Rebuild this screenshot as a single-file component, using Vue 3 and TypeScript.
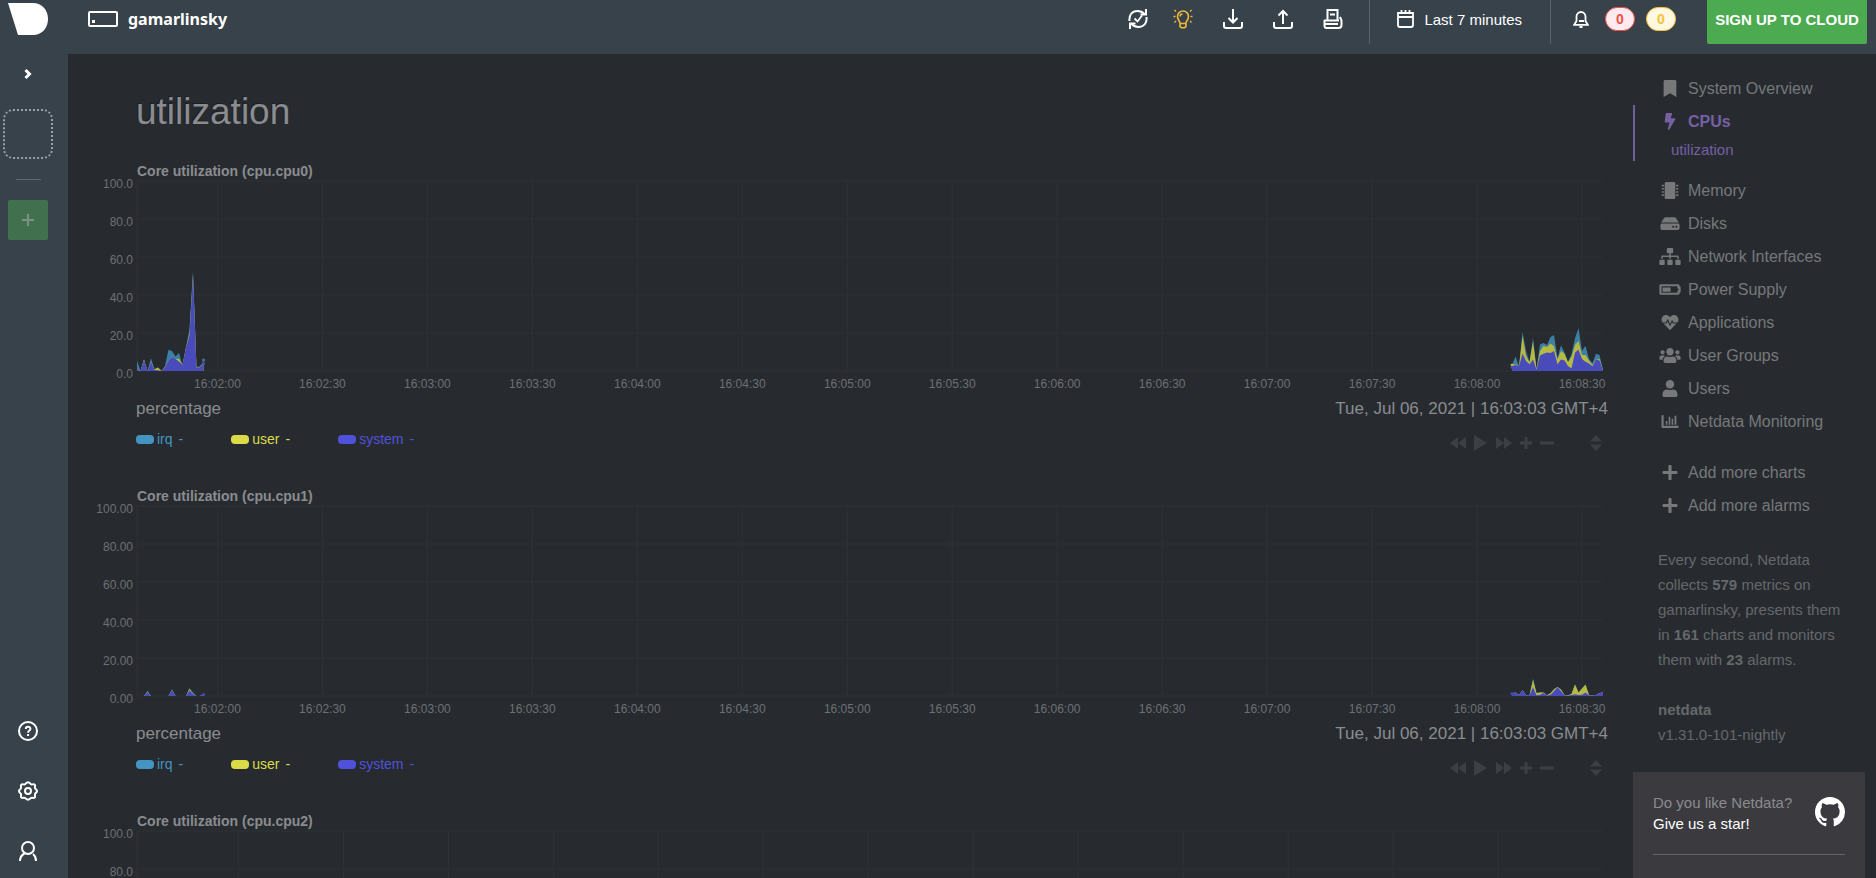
<script setup lang="ts">
interface Band { start: number; total: number[]; user: number[]; system: number[] }
interface Chart { id: string; digits: number; offset: number; firstTick: number; bands: Band[]; dots: { t: number; v: number; c: string }[] }

const SPAN = 419
const PLOT_H = 190

const charts: Chart[] = [
  {
    id: 'cpu.cpu0', digits: 1, offset: 23, firstTick: 120,
    bands: [
      {
        start: 0,
        total: [5.6, 0, 6.2, 0, 6.7, 0.9, 1.8, 0, 2.6, 11.2, 10.5, 7.7, 9.5, 3.2, 12.6, 22, 52.3, 2.1, 2.5, 5.3],
        user: [1, 0, 6, 0, 4.6, 0.9, 1.8, 0, 2.1, 5.3, 7.4, 6.3, 6.5, 3.2, 12.4, 19.5, 51, 1.6, 2, 4.2],
        system: [1, 0, 5.8, 0, 4.6, 0.6, 0.4, 0, 2, 5.3, 7.4, 6.3, 5, 3.2, 12.3, 18.5, 51, 1.6, 2, 4.2],
      },
      {
        start: 393,
        total: [3.2, 7.7, 2.5, 20.5, 10.5, 4.9, 17.5, 1, 14, 14.8, 13.7, 17.9, 19, 7, 13.5, 9.6, 4.9, 8.8, 17.2, 22.6, 10.5, 13.3, 6.3, 4.2, 9.1, 8.4, 0.7],
        user: [3.2, 3.5, 2.5, 18.4, 7.9, 4.6, 15.4, 1, 10.6, 13.2, 12.6, 14.4, 13, 6, 10.5, 9.1, 4.6, 7.7, 13.7, 15.8, 8.4, 8.4, 5.6, 3.2, 6.2, 6.3, 0.7],
        system: [2.5, 3.2, 2.5, 9.1, 5.3, 3.5, 6, 0.7, 8.1, 9.1, 9.8, 9.5, 10.5, 3.5, 6, 5.6, 2.5, 1.4, 9.8, 11.2, 6.3, 4.9, 3.9, 2.5, 6.2, 5.6, 0.4],
      },
    ],
    dots: [{ t: 19, v: 5.8, c: 'irq' }, { t: 19, v: 4, c: 'system' }, { t: 393, v: 3.2, c: 'user' }, { t: 393, v: 2, c: 'system' }],
  },
  {
    id: 'cpu.cpu1', digits: 2, offset: 23, firstTick: 120,
    bands: [
      {
        start: 0,
        total: [0, 0, 0, 2.8, 0, 0, 0, 0, 0, 0, 3.5, 0, 0, 0, 0, 4, 2, 0, 0, 0.8],
        user: [0, 0, 0, 2, 0, 0, 0, 0, 0, 0, 3.2, 0, 0, 0, 0, 4, 1, 0, 0, 0.8],
        system: [0, 0, 0, 1.8, 0, 0, 0, 0, 0, 0, 3.2, 0, 0, 0, 0, 3, 1, 0, 0, 0.8],
      },
      {
        start: 393,
        total: [1.4, 1.8, 0.5, 3, 0.4, 0.5, 9.1, 1.6, 1.9, 1.8, 0.4, 1.4, 3.5, 4.9, 3.5, 0.5, 0.4, 1.1, 6.1, 1.8, 3.9, 6.1, 0.5, 0.4, 0.5, 1.4, 2.1],
        user: [1.4, 1.8, 0.5, 3, 0.4, 0.5, 8.6, 1.6, 1.9, 1.8, 0.4, 1.4, 3.5, 4.7, 3.3, 0.5, 0.4, 1.1, 6.1, 1.8, 3.9, 6.1, 0.5, 0.4, 0.5, 1.4, 2.1],
        system: [1.4, 1.8, 0.5, 3, 0.4, 0.5, 4.6, 0.4, 0.7, 1.6, 0.3, 0.7, 2.5, 4.6, 2.5, 0.4, 0.3, 0.5, 0.9, 0.5, 0.7, 1.8, 0.4, 0.4, 0.5, 1.4, 2.1],
      },
    ],
    dots: [{ t: 19, v: 0.8, c: 'system' }, { t: 393, v: 1.2, c: 'system' }],
  },
  { id: 'cpu.cpu2', digits: 1, offset: 29, firstTick: 120, bands: [], dots: [] },
]

const dims = ['irq', 'user', 'system']
const levels = [100, 80, 60, 40, 20, 0]

const pct = (t: number) => `${(t / SPAN * 100).toFixed(3)}%`
const px = (v: number) => PLOT_H - v / 100 * PLOT_H

function ticks(c: Chart) {
  return Array.from({ length: 14 }, (_, i) => {
    const s = c.firstTick + i * 30
    const p = (n: number) => String(n).padStart(2, '0')
    return { t: c.offset + i * 30, label: `16:${p(Math.floor(s / 60))}:${p(s % 60)}` }
  }).filter(k => k.t < SPAN)
}

function area(b: Band, key: 'total' | 'user' | 'system') {
  const end = b.start + b[key].length - 1
  const line = b[key].map((v, i) => `L${b.start + i} ${px(v).toFixed(1)}`).join('')
  return `M${b.start} ${PLOT_H}${line}L${end} ${PLOT_H}Z`
}

const menuIcons: Record<string, { w: number; d: string }> = {
  bookmark: { w: 384, d: 'M0 512V48C0 21.5 21.5 0 48 0h288c26.500 0 48 21.500 48 48v464L192 400 0 512z' },
  bolt: { w: 320, d: 'M296 160H180.600l42.600-129.800C227.200 15 215.700 0 200 0H56C44 0 33.800 8.900 32.200 20.800l-32 240C-1.700 275.200 9.500 288 24 288h118.700L96.600 482.500c-3.600 15.200 8 29.500 23.300 29.500 8.400 0 16.400-4.400 20.800-12l176-304c9.300-15.900-2.200-36-20.700-36z' },
  memory: { w: 512, d: 'M416 48v416c0 26.500-21.500 48-48 48H144c-26.500 0-48-21.500-48-48V48c0-26.500 21.500-48 48-48h224c26.500 0 48 21.500 48 48zM440 84h42l30 12v24l-30 12h-42zM440 180h42l30 12v24l-30 12h-42zM440 276h42l30 12v24l-30 12h-42zM440 372h42l30 12v24l-30 12h-42zM72 84H30L0 96v24l30 12h42zM72 180H30L0 192v24l30 12h42zM72 276H30L0 288v24l30 12h42zM72 372H30L0 384v24l30 12h42z' },
  disk: { w: 576, d: 'M576 304v96c0 26.500-21.500 48-48 48H48c-26.500 0-48-21.500-48-48v-96c0-26.500 21.500-48 48-48h480c26.500 0 48 21.500 48 48zm-48-80a79.600 79.600 0 0 1 30.800 6.200L462.300 85.400A48 48 0 0 0 422.300 64H153.700a48 48 0 0 0-40 21.400L17.200 230.200A79.600 79.600 0 0 1 48 224h480zm-48 96c-17.700 0-32 14.300-32 32s14.300 32 32 32 32-14.300 32-32-14.300-32-32-32zm-96 0c-17.700 0-32 14.300-32 32s14.300 32 32 32 32-14.300 32-32-14.300-32-32-32z' },
  sitemap: { w: 640, d: 'M128 352H32c-17.700 0-32 14.300-32 32v96c0 17.700 14.300 32 32 32h96c17.700 0 32-14.300 32-32v-96c0-17.700-14.300-32-32-32zm-24-80h192v48h48v-48h192v48h48v-57.600c0-21.200-17.200-38.400-38.400-38.400H344v-64h40c17.700 0 32-14.300 32-32V32c0-17.700-14.300-32-32-32H256c-17.700 0-32 14.300-32 32v96c0 17.700 14.300 32 32 32h40v64H94.400C73.200 224 56 241.200 56 262.400V320h48v-48zm264 80h-96c-17.700 0-32 14.300-32 32v96c0 17.700 14.300 32 32 32h96c17.700 0 32-14.300 32-32v-96c0-17.700-14.300-32-32-32zm240 0h-96c-17.700 0-32 14.300-32 32v96c0 17.700 14.300 32 32 32h96c17.700 0 32-14.300 32-32v-96c0-17.700-14.300-32-32-32z' },
  battery: { w: 640, d: 'M544 160v64h32v64h-32v64H64V160h480m16-64H48c-26.500 0-48 21.500-48 48v224c0 26.500 21.500 48 48 48h512c26.500 0 48-21.500 48-48v-16h8c13.300 0 24-10.700 24-24V184c0-13.300-10.700-24-24-24h-8v-16c0-26.500-21.500-48-48-48zM336 192H96v128h240V192z' },
  heart: { w: 512, d: 'M320.200 243.800l-49.700 99.400c-6 12.100-23.400 11.700-28.900-.6l-56.900-126.300-30 71.700H60.600l182.500 186.500c7.100 7.300 18.600 7.300 25.700 0L451.400 288H342.300l-22.100-44.200zM473.700 73.900l-2.400-2.500c-51.500-52.600-135.800-52.600-187.400 0L256 100l-27.900-28.500c-51.500-52.700-135.900-52.700-187.400 0l-2.400 2.400C-10.400 123.700-12.500 203 31 256h102.400l35.900-86.200c5.400-12.900 23.600-13.200 29.400-.4l58.200 129.300 49-97.900c5.900-11.800 22.700-11.800 28.600 0l27.600 55.200H481c43.500-53 41.400-132.300-7.300-182.100z' },
  users: { w: 640, d: 'M96 224c35.300 0 64-28.700 64-64s-28.700-64-64-64-64 28.700-64 64 28.700 64 64 64zm448 0c35.300 0 64-28.700 64-64s-28.700-64-64-64-64 28.700-64 64 28.700 64 64 64zm32 32h-64c-17.600 0-33.500 7.100-45.100 18.600 40.300 22.100 68.900 62 75.100 109.400h66c17.700 0 32-14.300 32-32v-32c0-35.300-28.700-64-64-64zm-256 0c61.900 0 112-50.100 112-112S381.900 32 320 32 208 82.100 208 144s50.100 112 112 112zm76.800 32h-8.300c-20.800 10-43.900 16-68.500 16s-47.600-6-68.500-16h-8.300C179.600 288 128 339.600 128 403.200V432c0 26.500 21.500 48 48 48h288c26.500 0 48-21.500 48-48v-28.800c0-63.600-51.600-115.200-115.200-115.200zm-223.700-13.400C161.500 263.100 145.600 256 128 256H64c-35.300 0-64 28.700-64 64v32c0 17.700 14.300 32 32 32h65.900c6.300-47.400 34.900-87.300 75.200-109.400z' },
  user: { w: 448, d: 'M224 256c70.700 0 128-57.300 128-128S294.700 0 224 0 96 57.300 96 128s57.300 128 128 128zm89.600 32h-16.700c-22.200 10.200-46.900 16-72.900 16s-50.600-5.800-72.900-16h-16.700C60.200 288 0 348.200 0 422.400V464c0 26.500 21.500 48 48 48h352c26.500 0 48-21.500 48-48v-41.600c0-74.200-60.200-134.400-134.400-134.400z' },
  bars: { w: 512, d: 'M0 64h64v320h448v64H24c-13 0-24-11-24-24zM128 240h48v112h-48zM216 112h48v240h-48zM304 176h48v176h-48zM392 80h56v272h-56z' },
  plus: { w: 448, d: 'M416 208H272V64c0-17.700-14.300-32-32-32h-32c-17.700 0-32 14.300-32 32v144H32c-17.700 0-32 14.300-32 32v32c0 17.700 14.300 32 32 32h144v144c0 17.700 14.300 32 32 32h32c17.700 0 32-14.300 32-32V304h144c17.700 0 32-14.300 32-32v-32c0-17.700-14.300-32-32-32z' },
}

const menu = [
  { icon: 'memory', text: 'Memory' }, { icon: 'disk', text: 'Disks' },
  { icon: 'sitemap', text: 'Network Interfaces' }, { icon: 'battery', text: 'Power Supply' },
  { icon: 'heart', text: 'Applications' }, { icon: 'users', text: 'User Groups' },
  { icon: 'user', text: 'Users' }, { icon: 'bars', text: 'Netdata Monitoring' },
]
const extras = ['Add more charts', 'Add more alarms']
</script>

<template>
  <div class="app">
    <aside class="rail">
      <a class="logo" href="#" aria-label="Netdata">
        <svg width="40" height="32" viewBox="0 0 40 32"><path d="M0 0h25c9 0 15 7 15 16s-6 16-15 16H10z" fill="#fff" /></svg>
      </a>
      <button class="expand" aria-label="Expand">
        <svg width="8" height="12" viewBox="0 0 8 12"><path d="M1.500 2l4 4-4 4" fill="none" stroke="#fff" stroke-width="3" /></svg>
      </button>
      <div class="space"></div>
      <hr class="rail-rule">
      <button class="add" aria-label="Add space">
        <svg width="12" height="12" viewBox="0 0 12 12"><path d="M6 0v12M0 6h12" stroke="#7f8f88" stroke-width="2" /></svg>
      </button>
      <div class="rail-bottom">
        <button aria-label="Help">
          <svg width="20" height="20" viewBox="0 0 20 20" fill="none" stroke="#fff" stroke-width="2"><circle cx="10" cy="10" r="9" /><path d="M7.800 8c0-3 4.600-3 4.600-.2 0 1.800-2.300 1.700-2.300 4M10.100 13v2" /></svg>
        </button>
        <button aria-label="Settings">
          <svg width="20" height="20" viewBox="0 0 20 20" fill="none" stroke="#fff" stroke-width="2"><path d="M10 1.200c1.800 0 2 1.700 3.200 2.200s2.400-.8 3.500.3-.2 2.300.3 3.500 2 1.200 2 2.900-1.600 1.700-2 2.900.8 2.400-.3 3.500-2.300-.2-3.500.3-1.400 2-3.200 2-2-1.500-3.200-2-2.400.8-3.500-.3.2-2.300-.3-3.500-2-1.200-2-2.900 1.600-1.700 2-2.900-.8-2.400.3-3.500 2.300.2 3.500-.3 1.400-2.200 3.200-2.200z" /><circle cx="10" cy="10" r="3" /></svg>
        </button>
        <button aria-label="Account">
          <svg width="20" height="20" viewBox="0 0 20 20" fill="none" stroke="#fff" stroke-width="2"><circle cx="10" cy="7" r="6" /><path d="M2 20c0-4 1.500-6 4.500-7.500M18 20c0-3.500-1-5.500-3-7" /></svg>
        </button>
      </div>
    </aside>

    <header class="top">
      <svg width="30" height="16" viewBox="0 0 30 16" fill="none" stroke="#fff" stroke-width="2"><rect x="1" y="1" width="28" height="14" rx="1" /><path d="M4 10.500h3" stroke-width="3" /></svg>
      <strong class="host">gamarlinsky</strong>
      <div class="actions">
        <button aria-label="Refresh"><svg width="20" height="20" viewBox="0 0 20 20" fill="none" stroke="#fff" stroke-width="2"><path d="M1.500 12C.8 6 4 2 9.500 2c3 0 5 1 7 3M18.500 8c.7 6-2.500 10-8 10-3 0-5-1-7-3" /><path d="M6.500 9.500l3 3 4.500-6" stroke-width="1.800" /><path d="M18 0v5.500h-5.500M2 20v-5.500h5.500" /></svg></button>
        <button aria-label="News"><svg width="20" height="20" viewBox="0 0 20 20" fill="none" stroke="#f2b93a" stroke-width="1.600"><path d="M7 14c0-2-2.500-3-2.500-6.500a5.500 5.500 0 0 1 11 0C15.500 11 13 12 13 14v3.500l-1.500 1.200h-3L7 17.500zM7 14.500h6" /><path d="M7 7.500C7 6 8 5 9.500 5M3 2.500L1.500 1M17 2.500L18.500 1M2.500 7.500H.5M17.500 7.500h2M3 12l-1.500 1.500M17 12l1.500 1.500" stroke-width="1.400" /></svg></button>
        <button aria-label="Download"><svg width="20" height="20" viewBox="0 0 20 20" fill="none" stroke="#fff" stroke-width="2"><path d="M10 0v13M5.500 9l4.500 4.500L14.500 9M1 13v4c0 1.500.5 2 2 2h14c1.500 0 2-.5 2-2v-4" /></svg></button>
        <button aria-label="Upload"><svg width="20" height="20" viewBox="0 0 20 20" fill="none" stroke="#fff" stroke-width="2"><path d="M10 15V2M5.500 6.500L10 2l4.500 4.500M1 13v4c0 1.500.5 2 2 2h14c1.500 0 2-.5 2-2v-4" /></svg></button>
        <button aria-label="Print"><svg width="20" height="20" viewBox="0 0 20 20" fill="none" stroke="#fff" stroke-width="2"><path d="M4.500 11V1h10v10M7 5.500h5M1 11.500h15M1 15h14M1.500 11v5.500c0 1.500.5 2.500 2 2.500h12c2 0 3-1 3-3v-4.500L17 8" /></svg></button>
      </div>
      <button class="period">
        <svg width="17" height="18" viewBox="0 0 17 18" fill="none" stroke="#fff" stroke-width="2"><path d="M1 3h15v12c0 1.500-.5 2-2 2H3c-1.500 0-2-.5-2-2zM1 7h15M4.500 0v4M8.500 0v3M12.500 0v4" stroke-width="1.800" /></svg>
        Last 7 minutes
      </button>
      <button class="alarms">
        <svg width="16" height="18" viewBox="0 0 16 18" fill="none" stroke="#fff" stroke-width="1.800"><path d="M3.500 11V6.500a4.500 4.500 0 0 1 9 0V11l2.300 3.800H1.200zM6 11h5M6.500 17h3" /></svg>
        <span class="pill red">0</span>
        <span class="pill amber">0</span>
      </button>
      <button class="signup">SIGN UP TO CLOUD</button>
    </header>

    <main class="main">
      <h1>utilization</h1>
      <section v-for="c in charts" :key="c.id" class="chart">
        <h2>Core utilization ({{ c.id }})</h2>
        <div class="body">
          <div class="ylabels"><span v-for="l in levels" :key="l">{{ l.toFixed(c.digits) }}</span></div>
          <div class="plot">
            <svg class="canvas" :viewBox="`0 0 ${SPAN} ${PLOT_H}`" preserveAspectRatio="none">
              <line v-for="l in levels" :key="l" class="grid" x1="0" :x2="SPAN" :y1="px(l)" :y2="px(l)" />
              <line class="grid" x1="0" x2="0" y1="0" :y2="PLOT_H" />
              <line v-for="k in ticks(c)" :key="k.t" class="grid" :x1="k.t" :x2="k.t" y1="0" :y2="PLOT_H" />
              <g v-for="b in c.bands" :key="b.start">
                <path class="a-irq" :d="area(b, 'total')" />
                <path class="a-user" :d="area(b, 'user')" />
                <path class="a-system" :d="area(b, 'system')" />
              </g>
            </svg>
            <svg class="xaxis">
              <text v-for="k in ticks(c)" :key="k.t" :x="pct(k.t)" y="13" text-anchor="middle">{{ k.label }}</text>
            </svg>
            <svg class="dots">
              <circle v-for="(d, i) in c.dots" :key="i" :class="'a-' + d.c" :cx="pct(d.t)" :cy="px(d.v)" r="1.500" />
            </svg>
          </div>
        </div>
        <div class="info"><span>percentage</span><time>Tue, Jul 06, 2021 | 16:03:03 GMT+4</time></div>
        <div class="foot">
          <ul class="legend">
            <li v-for="d in dims" :key="d" :class="d"><i></i><span>{{ d }}</span><span>-</span></li>
          </ul>
          <div class="tools">
            <button aria-label="Pan left"><svg width="16" height="14" viewBox="0 0 16 14"><path d="M8 1v12L0 7zM16 1v12L8 7z" /></svg></button>
            <button aria-label="Play"><svg width="16" height="16" viewBox="0 0 16 16"><path d="M1 0l13 8-13 8z" /></svg></button>
            <button aria-label="Pan right"><svg width="16" height="14" viewBox="0 0 16 14"><path d="M0 1v12l8-6zM8 1v12l8-6z" /></svg></button>
            <button aria-label="Zoom in"><svg width="14" height="14" viewBox="0 0 14 14"><path d="M5.500 1h3v4.500H13v3H8.500V13h-3V8.500H1v-3h4.500z" /></svg></button>
            <button aria-label="Zoom out"><svg width="14" height="14" viewBox="0 0 14 14"><path d="M0 5.500h14v3H0z" /></svg></button>
            <button class="resize" aria-label="Resize"><svg width="12" height="16" viewBox="0 0 12 16"><path d="M6 0l6 6.500H0zM6 16l6-6.500H0z" /></svg></button>
          </div>
        </div>
      </section>
    </main>

    <nav class="side">
      <ul class="menu">
        <li><a href="#system"><svg viewBox="0 0 384 512"><path :d="menuIcons.bookmark.d" /></svg>System Overview</a></li>
        <li class="active">
          <a href="#cpu"><svg viewBox="0 0 320 512"><path :d="menuIcons.bolt.d" /></svg>CPUs</a>
          <a class="sub" href="#cpu-utilization">utilization</a>
        </li>
        <li v-for="m in menu" :key="m.text"><a href="#"><svg :viewBox="`0 0 ${menuIcons[m.icon].w} 512`"><path :d="menuIcons[m.icon].d" fill-rule="evenodd" /></svg>{{ m.text }}</a></li>
      </ul>
      <ul class="menu extra">
        <li v-for="e in extras" :key="e"><a href="#"><svg viewBox="0 0 448 512"><path :d="menuIcons.plus.d" /></svg>{{ e }}</a></li>
      </ul>
      <p class="about">Every second, Netdata collects <b>579</b> metrics on gamarlinsky, presents them in <b>161</b> charts and monitors them with <b>23</b> alarms.</p>
      <p class="about"><b>netdata</b><br>v1.31.0-101-nightly</p>
      <div class="card">
        <div class="star">
          <div>Do you like Netdata?<br><a href="#">Give us a star!</a></div>
          <svg width="30" height="30" viewBox="0 0 16 16"><path fill="#fff" d="M8 0C3.580 0 0 3.580 0 8c0 3.540 2.290 6.530 5.470 7.590.4.070.55-.17.55-.38 0-.19-.01-.82-.01-1.490-2.010.37-2.530-.49-2.690-.94-.09-.23-.48-.94-.82-1.130-.28-.15-.68-.52-.01-.53.63-.01 1.080.58 1.230.82.72 1.210 1.870.87 2.330.66.07-.52.28-.87.51-1.070-1.780-.2-3.640-.89-3.640-3.950 0-.87.31-1.590.82-2.150-.08-.2-.36-1.020.08-2.120 0 0 .67-.21 2.200.82.64-.18 1.320-.27 2-.27s1.360.09 2 .27c1.530-1.040 2.200-.82 2.200-.82.44 1.100.16 1.920.08 2.120.51.56.82 1.270.82 2.150 0 3.070-1.870 3.750-3.650 3.950.29.25.54.73.54 1.480 0 1.070-.01 1.930-.01 2.200 0 .21.15.46.55.38A8.010 8.010 0 0 0 16 8c0-4.420-3.580-8-8-8z" /></svg>
        </div>
      </div>
    </nav>
  </div>
</template>

<style>
body { margin: 0; background: #272b30; }
</style>

<style scoped>
.app {
  display: grid;
  grid-template: 54px minmax(0, 1fr) / 68px minmax(0, 1fr) 243px;
  height: 100vh;
  overflow: hidden;
  background: #272b30;
  color: #8a8c8f;
  font-family: "Liberation Sans", Arial, sans-serif;
}
button { padding: 0; border: 0; background: none; color: inherit; font: inherit; cursor: pointer; }
a { color: inherit; text-decoration: none; }
ul { margin: 0; padding: 0; list-style: none; }
svg { display: block; flex: none; }

.rail {
  grid-row: 1 / 3;
  display: flex;
  flex-direction: column;
  align-items: center;
  box-sizing: border-box;
  padding: 3px 12px 17px 0;
  background: #37424a;
}
.logo { margin-bottom: 33px; }
.expand { margin-bottom: 29px; }
.space { box-sizing: border-box; width: 50px; height: 50px; border: 2px dotted #9ba0a4; border-radius: 10px; }
.rail-rule { width: 25px; height: 1px; margin: 20px 0; border: 0; background: #5f686e; }
.add { display: grid; place-items: center; width: 40px; height: 40px; border-radius: 2px; background: #41704e; }
.rail-bottom { display: flex; flex-direction: column; gap: 40px; margin-top: auto; }

.top {
  grid-column: 2 / 4;
  display: flex;
  align-items: flex-start;
  box-sizing: border-box;
  padding: 0 9px 10px 20px;
  background: #37424a;
  color: #fff;
  font-size: 15px;
}
.top > svg { margin-top: 11px; }
.host { margin-left: 10px; font: 700 16px/38px "Noto Sans", sans-serif; }
.actions { display: flex; align-items: center; gap: 30px; height: 38px; margin-left: auto; padding-right: 26px; }
.actions button:first-child { margin-right: -5px; }
.period, .alarms { display: flex; align-items: center; box-sizing: border-box; height: 44px; padding: 0 0 6px; border-left: 1px solid #59636a; }
.period { gap: 10px; padding-left: 27px; padding-right: 28px; }
.alarms { padding-left: 22px; padding-right: 31px; gap: 11px; }
.alarms svg { margin-right: 5px; }
.pill { box-sizing: border-box; width: 30px; height: 24px; border: 1px solid; border-radius: 12px; line-height: 22px; font-weight: 700; font-size: 14px; }
.red { color: #f04f47; background: #ffebef; }
.amber { color: #f5c33c; background: #fff8e1; }
.signup { width: 160px; height: 44px; padding-bottom: 6px; border-radius: 0 0 2px 2px; background: #4caa50; font-weight: 700; }

.main { overflow: hidden; padding: 0 25px 0 26px; }
h1 { margin: 36px 0 30px 42px; font-size: 37px; line-height: 44px; font-weight: 400; text-shadow: -1px -1px 0 rgba(0, 0, 0, .3); }
.chart { height: 325px; }
h2 { margin: 0 0 2px 43px; font-size: 14px; line-height: 15px; font-weight: 700; }
.body { display: flex; }
.ylabels { display: flex; flex-direction: column; justify-content: space-between; box-sizing: border-box; width: 43px; height: 204px; margin-top: -4px; padding-right: 4px; text-align: right; font-size: 12px; line-height: 14px; color: #6d7073; }
.plot { display: grid; flex: 1; grid-template-rows: 190px 24px; margin-right: 5px; min-width: 0; }
.canvas, .dots { grid-area: 1 / 1; width: 100%; height: 190px; overflow: visible; }
.xaxis { grid-area: 2 / 1; width: 100%; height: 20px; margin-top: 4px; overflow: visible; }
.xaxis text { fill: #6d7073; font-size: 12px; }
.grid { stroke: #2c3337; stroke-width: 1px; vector-effect: non-scaling-stroke; }
.a-irq { fill: #3b80a4; }
.a-user { fill: #b7b943; }
.a-system { fill: #4a4bbb; }
.info { display: flex; justify-content: space-between; margin: 4px 0 0 42px; font-size: 17px; line-height: 20px; }
.foot { display: flex; justify-content: space-between; align-items: flex-start; margin: 11px 0 0 42px; }
.legend { display: flex; gap: 48px; font-size: 14px; line-height: 18px; }
.legend li { display: flex; align-items: center; }
.legend i { width: 18px; height: 9px; margin-right: 3px; border-radius: 4px; background: currentColor; }
.legend span + span { margin-left: 6px; }
.irq { color: #4394c1; }
.user { color: #dbdb48; }
.system { color: #5051db; }
.tools { display: flex; align-items: center; gap: 7px; height: 26px; padding-right: 6px; }
.tools svg { fill: #3c4045; }
.resize { margin-left: 29px; }

.side { display: flex; flex-direction: column; overflow: hidden; padding-right: 11px; }
.menu { padding-top: 18px; font-size: 16px; color: #76787a; }
.menu a { display: flex; align-items: center; height: 33px; padding-left: 25px; }
.menu svg { width: 24px; height: 17px; margin-right: 6px; fill: currentColor; }
.active { margin-bottom: 13px; border-left: 2px solid #705f9c; color: #765fa3; }
.active a { padding-left: 23px; font-weight: 700; }
.menu .sub { height: 23px; padding-left: 36px; font-size: 15px; font-weight: 400; }
.extra { margin-bottom: 25px; }
.about { margin: 0 15px 25px 25px; font-size: 15px; line-height: 25px; color: #65686a; }
.card { flex: 1; padding: 20px; background: #3a3a3f; }
.star { display: flex; justify-content: space-between; padding-bottom: 20px; border-bottom: 1px solid #65666b; font-size: 15px; line-height: 21px; color: #8a8b8e; }
.star svg { margin-top: 5px; }
.star a { color: #fff; }
</style>
